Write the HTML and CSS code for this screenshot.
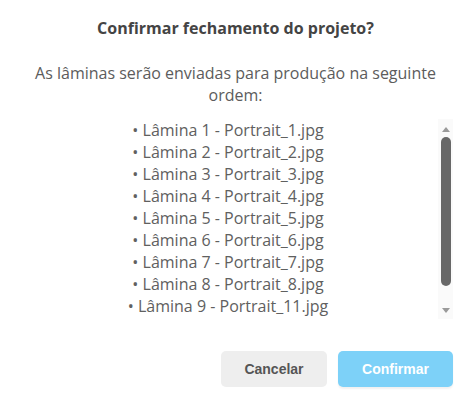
FILE: index.html
```html
<!DOCTYPE html>
<html lang="pt-BR">
<head>
<meta charset="utf-8">
<title>Confirmar fechamento</title>
<link rel="stylesheet" href="styles.css">
</head>
<body>
<div class="dialog">
  <h2 class="title">Confirmar fechamento do projeto?</h2>
  <p class="message">As lâminas serão enviadas para produção na seguinte ordem:</p>
  <div class="list-wrap">
    <ul class="list">
      <li>• Lâmina 1 - Portrait_1.jpg</li>
      <li>• Lâmina 2 - Portrait_2.jpg</li>
      <li>• Lâmina 3 - Portrait_3.jpg</li>
      <li>• Lâmina 4 - Portrait_4.jpg</li>
      <li>• Lâmina 5 - Portrait_5.jpg</li>
      <li>• Lâmina 6 - Portrait_6.jpg</li>
      <li>• Lâmina 7 - Portrait_7.jpg</li>
      <li>• Lâmina 8 - Portrait_8.jpg</li>
      <li>• Lâmina 9 - Portrait_11.jpg</li>
    </ul>
    <div class="scrollbar" aria-hidden="true">
      <span class="arrow arrow-up"></span>
      <span class="thumb"></span>
      <span class="arrow arrow-down"></span>
    </div>
  </div>
  <div class="actions">
    <button class="btn btn-cancel">Cancelar</button>
    <button class="btn btn-confirm">Confirmar</button>
  </div>
</div>
</body>
</html>
```
FILE: styles.css
```css
html, body {
  margin: 0;
  padding: 0;
  background: #ffffff;
}
.dialog {
  width: 471px;
  height: 401px;
  box-sizing: border-box;
  padding: 17px 18px 0 18px;
  font-family: "Open Sans", "Liberation Sans", sans-serif;
  display: flex;
  flex-direction: column;
}
.title {
  margin: 0;
  font-size: 16px;
  line-height: 22px;
  font-weight: 700;
  color: #444444;
  text-align: center;
}
.message {
  margin: 23px 0 0 0;
  font-size: 16px;
  line-height: 22px;
  color: #5c5c5c;
  text-align: center;
}
.list-wrap {
  display: flex;
  height: 200px;
  margin-top: 13px;
}
.list {
  flex: 1;
  list-style: none;
  margin: 0;
  padding: 0;
  overflow: hidden;
  font-size: 16px;
  line-height: 22px;
  color: #606060;
  text-align: center;
}
.list li {
  margin: 0;
}
.scrollbar {
  width: 15px;
  background: #fafafa;
  display: flex;
  flex-direction: column;
  align-items: center;
  padding-top: 8px;
  box-sizing: border-box;
}
.arrow {
  width: 0;
  height: 0;
  border-left: 4.5px solid transparent;
  border-right: 4.5px solid transparent;
}
.arrow-up {
  border-bottom: 5px solid #9a9a9a;
}
.arrow-down {
  border-top: 5px solid #9a9a9a;
  margin-top: 22px;
}
.thumb {
  width: 10px;
  height: 149px;
  margin-top: 5px;
  border-radius: 5px;
  background: #686868;
}
.actions {
  display: flex;
  justify-content: flex-end;
  gap: 11px;
  margin-top: 32px;
}
.btn {
  height: 36px;
  border: none;
  border-radius: 5px;
  font-family: "Liberation Sans", Arial, sans-serif;
  font-size: 14px;
  font-weight: 700;
  cursor: pointer;
}
.btn-cancel {
  width: 106px;
  background: #eeeeee;
  color: #555555;
}
.btn-confirm {
  width: 115px;
  background: #7dd1f8;
  color: #ffffff;
  box-shadow: 0 2px 2px rgba(0, 0, 0, 0.06);
}
```
